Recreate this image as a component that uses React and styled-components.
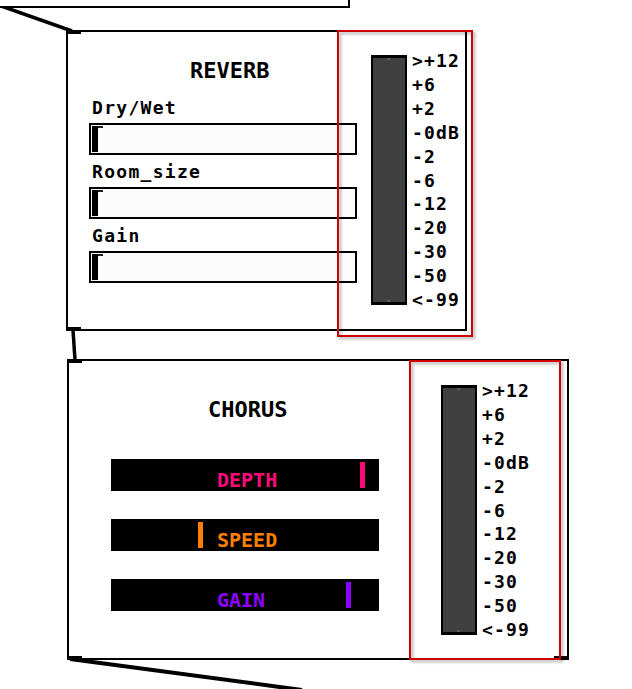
import styled, { createGlobalStyle } from "styled-components";

const GlobalStyle = createGlobalStyle`
  html, body {
    margin: 0;
    padding: 0;
    background: #fff;
  }
  body {
    font-family: "DejaVu Sans Mono", "Liberation Mono", monospace;
    font-weight: bold;
  }
`;

const Canvas = styled.div`
  position: relative;
  width: 632px;
  height: 689px;
  overflow: hidden;
  background: #fff;
`;

const Cords = styled.svg`
  position: absolute;
  left: 0;
  top: 0;
  width: 632px;
  height: 689px;
`;

// a patch object sitting on the free canvas
const Subpatch = styled.div`
  position: absolute;
  left: ${(p) => p.$x}px;
  top: ${(p) => p.$y}px;
  width: ${(p) => p.$w}px;
  height: ${(p) => p.$h}px;
  box-sizing: border-box;
  border: 2px solid #000;
  background: #fff;
  padding: ${(p) => p.$pad};
  display: flex;
  flex-direction: column;
  align-items: flex-start;
`;

const Iolet = styled.span`
  position: absolute;
  width: 15px;
  height: 4px;
  background: #000;
  ${(p) => (p.$right ? "right: -2px;" : "left: -2px;")}
  ${(p) => (p.$bottom ? "bottom: -2px;" : "top: -2px;")}
`;

const Title = styled.div`
  font-size: 22px;
  line-height: 22px;
  color: #000;
  margin: 0 0 ${(p) => p.$gap}px ${(p) => p.$indent}px;
`;

const Fields = styled.div`
  display: flex;
  flex-direction: column;
  gap: 9px;
`;

const Field = styled.div`
  display: flex;
  flex-direction: column;
  gap: 7px;
`;

const Label = styled.div`
  font-size: 18px;
  line-height: 16px;
  letter-spacing: 1.3px;
  margin-left: 3px;
  color: #000;
`;

const HSlider = styled.div`
  position: relative;
  width: 268px;
  height: 32px;
  box-sizing: border-box;
  border: 2px solid #000;
  background: #fcfcfc;
`;

const HKnob = styled.span`
  position: absolute;
  top: 1px;
  bottom: 1px;
  width: 6px;
  background: #000;
  &::after {
    content: "";
    position: absolute;
    left: 6px;
    top: 0;
    width: 5px;
    height: 2px;
    background: #222;
  }
`;

const Bars = styled.div`
  display: flex;
  flex-direction: column;
  gap: 28px;
`;

const Bar = styled.div`
  position: relative;
  width: 268px;
  height: 32px;
  box-sizing: border-box;
  background: #000;
  padding: 11px 0 0 106px;
  font-size: 20px;
  line-height: 20px;
  color: ${(p) => p.$color};
`;

const BarKnob = styled.span`
  position: absolute;
  top: 3px;
  bottom: 3px;
  width: 5px;
  background: ${(p) => p.$color};
`;

// graph-on-parent area, drawn over the subpatch border
const Gop = styled.div`
  position: absolute;
  left: ${(p) => p.$x}px;
  top: ${(p) => p.$y}px;
  width: ${(p) => p.$w}px;
  height: ${(p) => p.$h}px;
  box-sizing: border-box;
  padding: 25px 0 0 ${(p) => p.$inset}px;
  display: flex;
  gap: 5px;
  &::before {
    content: "";
    position: absolute;
    left: 0;
    top: 0;
    right: 0;
    bottom: 0;
    border: 2px solid #d00000;
    filter: drop-shadow(2px 2px 1.5px rgba(0, 0, 0, 0.35));
    pointer-events: none;
  }
`;

const Meter = styled.div`
  position: relative;
  width: 36px;
  height: 250px;
  box-sizing: border-box;
  border: 2px solid #000;
  border-top-width: 3px;
  border-bottom-width: 3px;
  background: #404040;
  &::before,
  &::after {
    content: "";
    position: absolute;
    left: 14px;
    width: 3px;
    height: 2px;
    background: #5c5c5c;
  }
  &::before {
    top: 0;
  }
  &::after {
    bottom: 0;
  }
`;

const Scale = styled.div`
  position: relative;
  display: flex;
  flex-direction: column;
  margin-top: -6px;
  font-size: 18px;
  line-height: 23.9px;
  letter-spacing: 1.2px;
  color: #000;
`;

const SCALE = [">+12", "+6", "+2", "-0dB", "-2", "-6", "-12", "-20", "-30", "-50", "<-99"];

function VU({ x, y, w, h, inset }) {
  return (
    <Gop $x={x} $y={y} $w={w} $h={h} $inset={inset}>
      <Meter />
      <Scale>
        {SCALE.map((s) => (
          <span key={s}>{s}</span>
        ))}
      </Scale>
    </Gop>
  );
}

const reverbParams = ["Dry/Wet", "Room_size", "Gain"];

const chorusParams = [
  { name: "DEPTH", color: "#ff0a78", value: 0.947 },
  { name: "SPEED", color: "#ff8000", value: 0.331 },
  { name: "GAIN", color: "#9000ff", value: 0.894 },
];

export default function App() {
  return (
    <Canvas>
      <GlobalStyle />
      <Cords viewBox="0 0 632 689">
        <line x1="-2" y1="5" x2="72" y2="31" stroke="#000" strokeWidth="3.5" />
        <line x1="73" y1="330" x2="75" y2="360" stroke="#000" strokeWidth="3.5" />
        <line x1="70" y1="659" x2="302" y2="690" stroke="#000" strokeWidth="4" />
      </Cords>

      <Subpatch $x={-10} $y={-10} $w={360} $h={18} />

      <Subpatch $x={66} $y={30} $w={401} $h={301} $pad="28px 0 0 21px">
        <Iolet />
        <Iolet $bottom />
        <Title $indent={101} $gap={18}>REVERB</Title>
        <Fields>
          {reverbParams.map((name) => (
            <Field key={name}>
              <Label>{name}</Label>
              <HSlider>
                <HKnob style={{ left: 1 }} />
              </HSlider>
            </Field>
          ))}
        </Fields>
        <VU x={269} y={-2} w={136} h={307} inset={34} />
      </Subpatch>

      <Subpatch $x={67} $y={359} $w={502} $h={301} $pad="38px 0 0 42px">
        <Iolet />
        <Iolet $bottom />
        <Iolet $bottom $right />
        <Title $indent={97} $gap={38}>CHORUS</Title>
        <Bars>
          {chorusParams.map((p) => (
            <Bar key={p.name} $color={p.color}>
              {p.name}
              <BarKnob $color={p.color} style={{ left: Math.round(p.value * 263) }} />
            </Bar>
          ))}
        </Bars>
        <VU x={340} y={-1} w={152} h={300} inset={32} />
      </Subpatch>
    </Canvas>
  );
}
